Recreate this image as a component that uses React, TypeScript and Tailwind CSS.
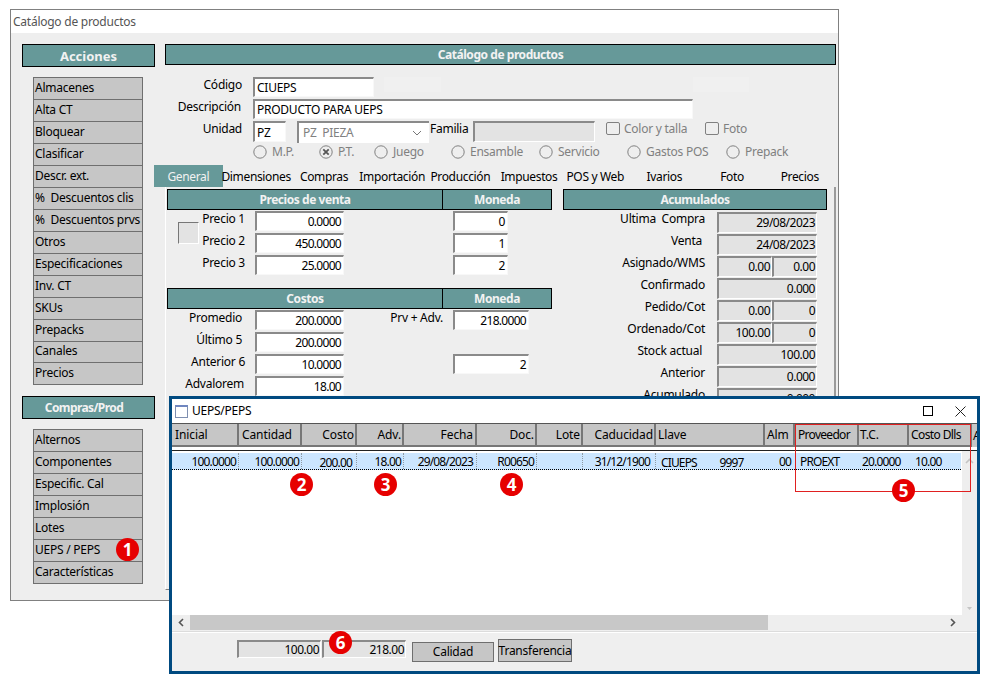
const teal = 'bg-[#669999]'

const actions = ['Almacenes', 'Alta CT', 'Bloquear', 'Clasificar', 'Descr. ext.', '%  Descuentos clis', '%  Descuentos prvs', 'Otros', 'Especificaciones', 'Inv. CT', 'SKUs', 'Prepacks', 'Canales', 'Precios']
const compras = ['Alternos', 'Componentes', 'Especific. Cal', 'Implosión', 'Lotes', 'UEPS / PEPS', 'Características']
const tabs = [
  { name: 'Dimensiones', w: 'w-[67px]' },
  { name: 'Compras', w: 'w-[69px]' },
  { name: 'Importación', w: 'w-[68px]' },
  { name: 'Producción', w: 'w-[69px]' },
  { name: 'Impuestos', w: 'w-[69px]' },
  { name: 'POS y Web', w: 'w-[64px]' },
  { name: 'Ivarios', w: 'w-[75px]' },
  { name: 'Foto', w: 'w-[61px]' },
  { name: 'Precios', w: 'w-[75px]' },
]
const radios = [
  { name: 'M.P.', w: 'w-[66px]' },
  { name: 'P.T.', w: 'w-[55px]', on: true },
  { name: 'Juego', w: 'w-[77px]' },
  { name: 'Ensamble', w: 'w-[88px]' },
  { name: 'Servicio', w: 'w-[88px]' },
  { name: 'Gastos POS', w: 'w-[99px]' },
  { name: 'Prepack', w: 'w-[70px]' },
]
const precios = [
  { label: 'Precio 1', value: '0.0000', moneda: '0' },
  { label: 'Precio 2', value: '450.0000', moneda: '1' },
  { label: 'Precio 3', value: '25.0000', moneda: '2' },
]
const costos = [
  { label: 'Promedio', pr: 'pr-[3px]', value: '200.0000', side: '218.0000', note: 'Prv + Adv.' },
  { label: 'Último 5', pr: 'pr-[3px]', value: '200.0000', side: '', note: '' },
  { label: 'Anterior 6', pr: 'pr-0', value: '10.0000', side: '2', note: '' },
  { label: 'Advalorem', pr: 'pr-[1px]', value: '18.00', side: '', note: '' },
]
const acumulados = [
  { label: 'Ultima  Compra', a: '29/08/2023' },
  { label: 'Venta', a: '24/08/2023', pr: 'pr-[3px]' },
  { label: 'Asignado/WMS', a: '0.00', b: '0.00' },
  { label: 'Confirmado', a: '0.000' },
  { label: 'Pedido/Cot', a: '0.00', b: '0' },
  { label: 'Ordenado/Cot', a: '100.00', b: '0' },
  { label: 'Stock actual', a: '100.00', pr: 'pr-[3px]' },
  { label: 'Anterior', a: '0.000' },
  { label: 'Acumulado', a: '0.000' },
]
const columns = [
  { name: 'Inicial', w: 'w-[67px]', cls: 'justify-start pl-[3px]', val: '100.0000', valCls: 'text-right pr-[2px] border-r border-dotted border-r-[#8f9ba5]' },
  { name: 'Cantidad', w: 'w-[63px]', cls: 'justify-start pl-[3px]', val: '100.0000', valCls: 'text-right pr-[2px] border-r border-dotted border-r-[#8f9ba5]' },
  { name: 'Costo', w: 'w-[55px]', cls: 'justify-end pr-[1px]', val: '200.00', valCls: 'text-right pr-[4px] pt-[1px] border-r border-dotted border-r-[#8f9ba5]' },
  { name: 'Adv.', w: 'w-[47px]', cls: 'justify-end pr-[1px]', val: '18.00', valCls: 'text-right pr-[2px] border-r border-dotted border-r-[#8f9ba5]' },
  { name: 'Fecha', w: 'w-[73px]', cls: 'justify-end pr-[2px]', val: '29/08/2023', valCls: 'text-right pr-[3px] border-r border-dotted border-r-[#8f9ba5]' },
  { name: 'Doc.', w: 'w-[60px]', cls: 'justify-end pr-[1px]', val: 'R00650', valCls: 'text-right pr-[2px] border-r border-dotted border-r-[#8f9ba5]' },
  { name: 'Lote', w: 'w-[46px]', cls: 'justify-end pr-[1px]', val: '', valCls: 'border-r border-dotted border-r-[#8f9ba5]' },
  { name: 'Caducidad', w: 'w-[73px]', cls: 'justify-end pr-[1px]', val: '31/12/1900', valCls: 'text-right pr-[5px] border-r border-dotted border-r-[#8f9ba5]' },
  { name: 'Llave', w: 'w-[109px]', cls: 'justify-start pl-[2px]', val: 'CIUEPS          9997', valCls: 'text-left pl-[5px] pt-[1px]' },
  { name: 'Alm', w: 'w-[30px]', cls: 'justify-start pl-[2px]', val: '00', valCls: 'text-right pr-[4px]' },
  { name: 'Proveedor', w: 'w-[64px]', cls: 'justify-start pl-[3px] tracking-[-0.7px]', val: 'PROEXT', valCls: 'text-left pl-[5px]' },
  { name: 'T.C.', w: 'w-[50px]', cls: 'justify-start pl-[1px]', val: '20.0000', valCls: 'text-left pl-[3px]' },
  { name: 'Costo Dlls', w: 'w-[63px]', cls: 'justify-start pl-[2px] tracking-[-0.6px]', val: '10.00', valCls: 'text-left pl-[6px]' },
]

function Header({ children, className }: any) {
  return <div className={`${teal} border border-black flex items-center justify-center pt-[1px] font-bold text-[#f2f2f2] h-[21px] tracking-[-0.45px] ${className}`}>{children}</div>
}

function Field({ children, className }: any) {
  return <div className={`bg-white border-t-2 border-l-2 border-t-[#8a8a8a] border-l-[#8a8a8a] border-r border-b border-r-[#f8f8f8] border-b-[#f8f8f8] flex items-center overflow-hidden px-[2px] pt-[1px] text-black whitespace-pre ${className}`}>{children}</div>
}

function ReadOnly({ children, className }: any) {
  return <div className={`bg-[#e3e3e3] border-t-2 border-l-2 border-t-[#8a8a8a] border-l-[#8a8a8a] border-r border-b border-r-white border-b-white flex items-center justify-end overflow-hidden px-[1px] text-black tracking-[-0.5px] ${className}`}>{children}</div>
}

function SideButton({ label, h }: { label: string; h: string }) {
  return <div className={`${h} bg-[#c6c6c6] border-b border-[#6f6f6f] px-[1px] pb-[2px] flex items-center text-black whitespace-pre`}>{label}</div>
}

function SideList({ items, className }: any) {
  return <div className={`ml-[11px] w-[110px] border-x border-t border-[#6f6f6f] ${className}`}>{items.map((i: string) => <SideButton key={i} label={i} h={i === 'Canales' ? 'h-[21px]' : 'h-[22px]'} />)}</div>
}

function Badge({ n, className }: any) {
  return <div className={`absolute w-[23px] h-[23px] rounded-full bg-[#e60000] text-white font-bold text-[17px] leading-none flex items-center justify-center ${className}`}>{n}</div>
}

function Radio({ on }: { on?: boolean }) {
  return (
    <svg width="14" height="14" viewBox="0 0 14 14" className="shrink-0">
      <circle cx="7" cy="7" r="6.2" fill="#eeeeee" stroke="#808080" strokeWidth="1" />
      {on && <path d="M4.3 4.3l5.4 5.4M9.7 4.3l-5.4 5.4" stroke="#555" strokeWidth="1.8" />}
    </svg>
  )
}

function Check({ label, className }: any) {
  return (
    <div className={`flex items-center gap-[4px] text-[#808080] ${className}`}>
      <div className="w-[14px] h-[13px] rounded-[2px] border border-[#808080]"></div>
      {label}
    </div>
  )
}

function MainWindow() {
  return (
    <div className="absolute left-[10px] top-[9px] w-[829px] h-[592px] border border-[#808080] bg-[#eeeeee]">
      <div className="h-[23px] bg-white flex items-center pl-[2px] text-[#555555]">Catálogo de productos</div>
      <div className="flex pt-[11px] pl-[11px]">
        <div className="w-[143px] shrink-0">
          <Header className="w-[133px] !h-[23px] !tracking-normal text-[13px]">Acciones</Header>
          <SideList items={actions} className="mt-[10px]" />
          <Header className="w-[133px] !h-[23px] mt-[11px] pr-[9px] !tracking-[-0.6px]">Compras/Prod</Header>
          <SideList items={compras} className="mt-[10px]" />
        </div>
        <div className="w-[672px] shrink-0">
          <Header className="w-[671px] mb-[12px]">Catálogo de productos</Header>
          <div className="flex h-[21px] mb-[1px]">
            <div className="w-[77px] text-right leading-[16px]">Código</div>
            <Field className="ml-[11px] w-[121px] h-[20px]">CIUEPS</Field>
            <div className="ml-[10px] w-[57px] h-[15px] bg-[#f0f0f0]"></div>
            <div className="ml-[252px] w-[56px] h-[15px] bg-[#f0f0f0]"></div>
          </div>
          <div className="flex h-[21px] mb-[1px]">
            <div className="w-[76px] text-right leading-[16px]">Descripción</div>
            <Field className="ml-[12px] w-[440px] h-[20px]">PRODUCTO PARA UEPS</Field>
          </div>
          <div className="flex h-[22px] items-start">
            <div className="w-[77px] text-right leading-[16px]">Unidad</div>
            <Field className="ml-[11px] w-[33px] h-[21px]">PZ</Field>
            <div className="ml-[11px] w-[132px] h-[22px] bg-white border-t-2 border-l-2 border-t-[#8a8a8a] border-l-[#8a8a8a] flex items-center justify-between px-[4px] text-[#808080] whitespace-pre">
              PZ  PIEZA
              <svg width="10" height="6" viewBox="0 0 10 6" className="mr-[3px]"><path d="M1 1l4 4 4-4" fill="none" stroke="#777" strokeWidth="1" /></svg>
            </div>
            <div className="w-[44px] pl-[1px] leading-[16px]">Familia</div>
            <div className="w-[122px] h-[21px] bg-[#e3e3e3] border-t-2 border-l-2 border-t-[#8a8a8a] border-l-[#8a8a8a] border-r border-b border-r-white border-b-white"></div>
            <Check label="Color y talla" className="ml-[11px] mt-[1px] w-[99px]" />
            <Check label="Foto" className="mt-[1px]" />
          </div>
          <div className="flex items-center h-[17px] pl-[88px] text-[#808080]">
            {radios.map(r => (
              <div key={r.name} className={`flex items-center gap-[5px] whitespace-nowrap ${r.w}`}><Radio on={r.on} />{r.name}</div>
            ))}
          </div>
          <div className="flex items-center h-[22px] mt-[5px] ml-[-11px] tracking-[-0.35px]">
            <div className={`${teal} w-[69px] h-[22px] pt-[2px] flex items-center justify-center text-[#f2f2f2]`}>General</div>
            {tabs.map(t => <div key={t.name} className={`${t.w} pt-[2px] flex justify-center whitespace-nowrap`}>{t.name}</div>)}
          </div>
          <div className="h-[403px] border-l border-r-2 border-b border-l-white border-r-[#9a9a9a] border-b-[#808080] w-[671px] pl-[1px] pt-[2px] flex">
            <div className="w-[396px] shrink-0">
              <div className="flex">
                <Header className="w-[276px]">Precios de venta</Header>
                <Header className="w-[110px] ml-[-1px]">Moneda</Header>
              </div>
              <div className="flex">
                <div className="w-[11px]"></div>
                <div className="w-[21px] h-[22px] mt-[12px] bg-[#e3e3e3] border-t border-l border-t-[#777] border-l-[#777] border-r border-b border-r-white border-b-white"></div>
                <div className="flex flex-col">
                  {precios.map(p => (
                    <div key={p.label} className="flex h-[22px]">
                      <div className="w-[44px] ml-[2px] text-right mt-[1px] leading-[16px]">{p.label}</div>
                      <Field className="ml-[10px] w-[89px] h-[20px] justify-end mt-[1px] tracking-[-0.7px]">{p.value}</Field>
                      <div className="w-[109px]"></div>
                      <Field className="w-[55px] h-[20px] justify-end mt-[1px]">{p.moneda}</Field>
                    </div>
                  ))}
                </div>
              </div>
              <div className="flex mt-[12px]">
                <Header className="w-[276px]">Costos</Header>
                <Header className="w-[110px] ml-[-1px]">Moneda</Header>
              </div>
              <div className="flex flex-col">
                {costos.map(c => (
                  <div key={c.label} className="flex h-[22px]">
                    <div className={`w-[78px] text-right mt-[1px] leading-[16px] ${c.pr}`}>{c.label}</div>
                    <Field className="ml-[10px] w-[89px] h-[20px] justify-end mt-[1px] tracking-[-0.7px]">{c.value}</Field>
                    <div className="w-[109px] text-right pr-[10px] mt-[1px] leading-[16px]">{c.note}</div>
                    {c.side ? <Field className="w-[76px] h-[20px] justify-end mt-[1px] tracking-[-0.7px]">{c.side}</Field> : null}
                  </div>
                ))}
              </div>
            </div>
            <div className="w-[264px] shrink-0">
              <Header className="w-[264px]">Acumulados</Header>
              <div className="flex flex-col pt-[2px]">
                {acumulados.map(a => (
                  <div key={a.label} className="flex h-[22px]">
                    <div className={`w-[142px] text-right leading-[14px] whitespace-pre ${a.pr || ''}`}>{a.label}</div>
                    <div className="w-[12px]"></div>
                    {a.b ? (
                      <div className="flex w-[100px]">
                        <ReadOnly className="w-[55px] h-[21px]">{a.a}</ReadOnly>
                        <ReadOnly className="w-[45px] h-[21px]">{a.b}</ReadOnly>
                      </div>
                    ) : (
                      <ReadOnly className="w-[100px] h-[21px]">{a.a}</ReadOnly>
                    )}
                  </div>
                ))}
              </div>
            </div>
          </div>
        </div>
      </div>
    </div>
  )
}

function UepsWindow() {
  return (
    <div className="absolute left-[169px] top-[396px] w-[811px] h-[278px] border-[3px] border-[#004a80] bg-white flex flex-col">
      <div className="h-[24px] flex items-center justify-between pl-[3px] text-black shrink-0">
        <div className="flex items-center gap-[4px]">
          <div className="w-[13px] h-[13px] border border-[#7f8fb0] border-t-2 border-t-[#6f86c0] bg-white"></div>
          UEPS/PEPS
        </div>
        <div className="flex items-center">
          <div className="w-[10px] h-[10px] border border-black mr-[22px]"></div>
          <svg width="11" height="11" viewBox="0 0 11 11" className="mr-[11px]"><path d="M.5.5l10 10M10.5.5l-10 10" stroke="#222" strokeWidth="1" /></svg>
        </div>
      </div>
      <div className="h-[28px] border-t border-b border-t-[#555] border-b-[#222] overflow-hidden shrink-0 flex tracking-[-0.1px]">
        {columns.map(c => (
          <div key={c.name} className={`${c.w} ${c.cls} h-[23px] bg-[#c6c6c6] shrink-0 border-r-2 border-b-2 border-[#777] flex items-center whitespace-nowrap`}>{c.name}</div>
        ))}
        <div className="h-[23px] flex-1 bg-[#c6c6c6] pl-[1px] flex items-center overflow-hidden">A</div>
      </div>
      <div className="flex flex-1">
        <div className="flex-1 pt-[2px] overflow-hidden">
          <div className="flex h-[17px] bg-[#cce6ff] border-b border-dotted border-b-black w-[789px] overflow-hidden tracking-[-0.85px]">
            {columns.map(c => (
              <div key={c.name} className={`${c.w} ${c.valCls} shrink-0 h-full leading-[18px] whitespace-pre`}>{c.val}</div>
            ))}
          </div>
        </div>
        <div className="w-[15px] bg-[#eeeeee] flex flex-col items-center justify-between pt-[7px] pb-[5px]">
          <svg width="9" height="6" viewBox="0 0 9 6"><path d="M1 5l3.5-3.5L8 5" fill="none" stroke="#c4c4c4" strokeWidth="1.6" /></svg>
          <svg width="5" height="3" viewBox="0 0 5 3"><path d="M0 0h5L2.5 3z" fill="#c4c4c4" /></svg>
        </div>
      </div>
      <div className="flex h-[15px] bg-[#eeeeee] items-center shrink-0">
        <div className="w-[18px] flex justify-center">
          <svg width="6" height="9" viewBox="0 0 6 9"><path d="M5 1L1.5 4.5 5 8" fill="none" stroke="#555" strokeWidth="1.6" /></svg>
        </div>
        <div className="w-[578px] h-full bg-[#c8c8c8]"></div>
        <div className="flex-1 flex justify-end pr-[21px]">
          <svg width="6" height="9" viewBox="0 0 6 9"><path d="M1 1l3.5 3.5L1 8" fill="none" stroke="#555" strokeWidth="1.6" /></svg>
        </div>
      </div>
      <div className="h-[41px] bg-[#efefef] pt-[1px] shrink-0">
        <div className="h-[40px] border-t border-t-[#dcdcdc]">
          <div className="h-[39px] border-t border-t-white flex items-start pl-[65px] pt-[7px]">
            <ReadOnly className="w-[84px] h-[18px]">100.00</ReadOnly>
            <ReadOnly className="w-[84px] h-[18px] ml-[1px]">218.00</ReadOnly>
            <div className="ml-[6px] mt-[2px] w-[82px] h-[20px] bg-[#c6c6c6] border border-[#6f6f6f] flex items-center justify-center">Calidad</div>
            <div className="ml-[4px] mt-[-1px] w-[74px] h-[23px] bg-[#c6c6c6] border border-[#6f6f6f] flex items-center justify-center whitespace-nowrap">Transferencia</div>
          </div>
        </div>
      </div>
    </div>
  )
}

export default function App() {
  return (
    <div className="relative w-[989px] h-[683px] bg-white overflow-hidden font-['Noto_Sans',sans-serif] text-[12px] tracking-[-0.25px] leading-none text-black">
      <MainWindow />
      <UepsWindow />
      <div className="absolute left-[795px] top-[424px] w-[176px] h-[68px] border border-[#e02020]"></div>
      <Badge n="1" className="left-[116px] top-[538px]" />
      <Badge n="2" className="left-[290px] top-[473px]" />
      <Badge n="3" className="left-[374px] top-[473px]" />
      <Badge n="4" className="left-[500px] top-[473px]" />
      <Badge n="5" className="left-[892px] top-[479px]" />
      <Badge n="6" className="left-[329px] top-[631px]" />
    </div>
  )
}
